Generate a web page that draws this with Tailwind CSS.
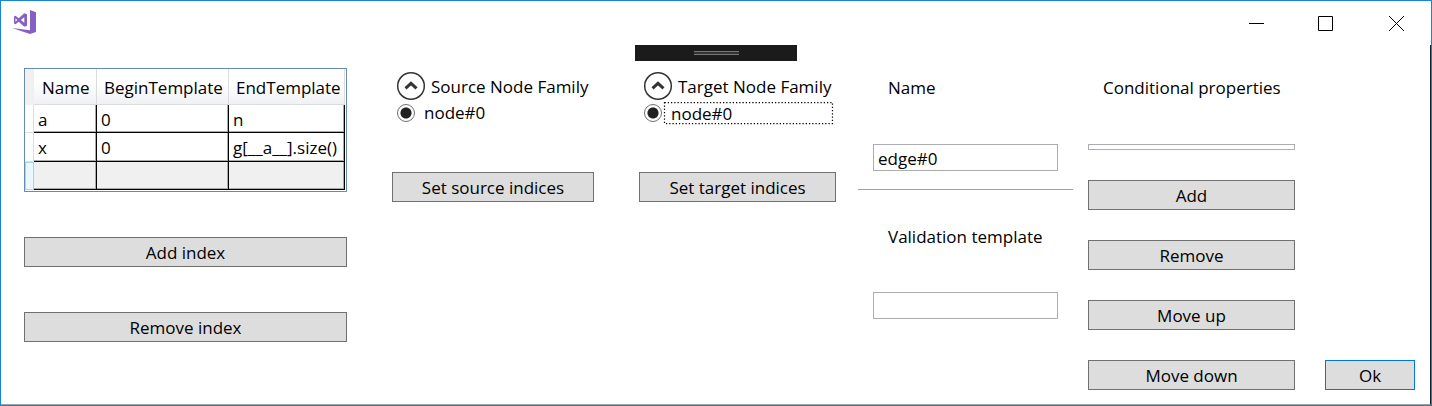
<!DOCTYPE html>
<html lang="en">
<head>
<meta charset="utf-8">
<meta name="viewport" content="width=device-width, initial-scale=1">
<title>Edge editor</title>
<script src="https://cdn.jsdelivr.net/npm/@tailwindcss/browser@4"></script>
</head>
<body class="bg-white font-['Open_Sans','Noto_Sans',sans-serif] text-[17px] leading-6 text-black">
<div class="flex min-h-screen flex-col border border-[#1883d7]">
  <header class="flex h-11 items-start justify-between">
    <svg class="mt-[9px] ml-[11px] size-6" viewBox="0 0 24 24" fill="#865fc5" aria-hidden="true">
      <path d="M18 0 24 2.300V22L18 24 0 18l18 2.300z"/>
      <path fill-rule="evenodd" d="M12.300 3.200 15 4.300V15.700L12.300 16.800 6.700 11.700 3.500 14.300 2 13.600V6.400L3.500 5.700 6.700 8.300zM12.300 7.200 8.800 10l3.500 2.800zM3.500 8.200V11.800L5.300 10z"/>
    </svg>
    <div class="flex">
      <button type="button" aria-label="Minimize" class="flex h-11 w-[68px] items-center justify-center"><svg class="size-[15px]" viewBox="0 0 15 15" stroke="#000" fill="none"><path d="M0 7.500H15"/></svg></button>
      <button type="button" aria-label="Maximize" class="flex h-11 w-[71px] items-center justify-center"><svg class="size-[15px]" viewBox="0 0 15 15" stroke="#000" fill="none"><path d="M.5.5h14v14H.5z"/></svg></button>
      <button type="button" aria-label="Close" class="flex h-11 w-[70px] items-center justify-center"><svg class="size-[15px]" viewBox="0 0 15 15" stroke="#000" fill="none"><path d="m0 0 15 15M15 0 0 15"/></svg></button>
    </div>
  </header>

  <main class="relative flex grow border-r border-b border-r-[#1b1b1c] border-b-[#a0a0a0] pt-[23px] pr-[15px] pb-[14px] pl-[23px]">
    <div class="absolute top-0 left-[634px] flex h-4 w-[162px] items-center justify-center bg-[#1b1b1c]"><span class="h-1 w-[45px] border-y border-[#777] bg-[#333]"></span></div>

    <section class="mr-[45px] flex min-w-0 flex-[323] flex-col">
      <div class="border border-[#688caf] pr-px pb-px">
      <table class="w-full table-fixed border-separate border-spacing-0 text-left">
        <colgroup><col class="w-[9px]"><col class="w-[63px]"><col class="w-[132px]"><col></colgroup>
        <thead>
          <tr class="h-9">
            <td class="bg-[#f0f0f0]"></td>
            <th scope="col" class="border-r border-b border-[#dcdcdc] bg-linear-to-b from-white from-40% to-[#f0f1f3] pt-[2px] pl-2 font-normal">Name</th>
            <th scope="col" class="border-r border-b border-[#dcdcdc] bg-linear-to-b from-white from-40% to-[#f0f1f3] pt-[2px] pl-[7px] font-normal">BeginTemplate</th>
            <th scope="col" class="border-r border-b border-[#dcdcdc] bg-linear-to-b from-white from-40% to-[#f0f1f3] pt-[2px] pl-[7px] font-normal">EndTemplate</th>
          </tr>
        </thead>
        <tbody>
          <tr class="h-7">
            <td class="border-r border-b border-[#dcdcdc]"></td>
            <td class="border-r border-b border-black pt-[2px] pl-1 leading-5 shadow-[inset_-1px_-1px_#aaa]">a</td>
            <td class="border-r border-b border-black pt-[2px] pl-1 leading-5 shadow-[inset_-1px_-1px_#aaa]">0</td>
            <td class="border-r border-b border-black pt-[2px] pl-1 leading-5 shadow-[inset_-1px_-1px_#aaa]">n</td>
          </tr>
          <tr class="h-[29px]">
            <td class="border-r border-b border-[#dcdcdc]"></td>
            <td class="border-r border-b border-black pt-[2px] pl-1 leading-5 shadow-[inset_-1px_-1px_#aaa]">x</td>
            <td class="border-r border-b border-black pt-[2px] pl-1 leading-5 shadow-[inset_-1px_-1px_#aaa]">0</td>
            <td class="border-r border-b border-black pt-[2px] pl-1 leading-5 shadow-[inset_-1px_-1px_#aaa]">g[__a__].size()</td>
          </tr>
          <tr class="h-7">
            <td class="border border-[#99d9f5] bg-[#eaf7fd]"></td>
            <td class="border-r border-b border-black bg-[#f0f0f0] shadow-[inset_-1px_-1px_#aaa]"></td>
            <td class="border-r border-b border-black bg-[#f0f0f0] shadow-[inset_-1px_-1px_#aaa]"></td>
            <td class="border-r border-b border-black bg-[#f0f0f0] shadow-[inset_-1px_-1px_#aaa]"></td>
          </tr>
        </tbody>
      </table>
      </div>
      <button type="button" class="mt-[45px] h-[30px] border border-[#707070] bg-[#ddd] pt-[2px]">Add index</button>
      <button type="button" class="mt-[45px] h-[30px] border border-[#707070] bg-[#ddd] pt-[2px]">Remove index</button>
    </section>

    <section class="mr-[45px] flex min-w-0 flex-[202] flex-col">
      <button type="button" aria-expanded="true" class="mt-[3px] ml-1 flex h-[30px] items-center gap-[5px] whitespace-nowrap">
        <svg class="size-[30px] shrink-0" viewBox="0 0 30 30" fill="none" stroke="#333"><circle cx="15" cy="15" r="13.300" stroke-width="1.500"/><path d="m9.500 17.300 5.500-5 5.500 5" stroke-width="3"/></svg>
        <span class="pt-[2px]">Source Node Family</span>
      </button>
      <label class="ml-[5px] flex h-6 items-center gap-[9px]">
        <input type="radio" name="source" checked class="size-[18px] appearance-none rounded-full border border-[#707070] bg-white bg-radial from-[#212121] from-[5px] to-white to-[6px]">
        node#0
      </label>
      <button type="button" class="mt-[47px] h-[30px] border border-[#707070] bg-[#ddd] pt-[2px]">Set source indices</button>
    </section>

    <section class="mr-[22px] flex min-w-0 flex-[197] flex-col">
      <button type="button" aria-expanded="true" class="mt-[3px] ml-1 flex h-[30px] items-center gap-[5px] whitespace-nowrap">
        <svg class="size-[30px] shrink-0" viewBox="0 0 30 30" fill="none" stroke="#333"><circle cx="15" cy="15" r="13.300" stroke-width="1.500"/><path d="m9.500 17.300 5.500-5 5.500 5" stroke-width="3"/></svg>
        <span class="pt-[2px]">Target Node Family</span>
      </button>
      <label class="mr-[3px] ml-[5px] flex h-6 items-center gap-[2px]">
        <input type="radio" name="target" checked class="size-[18px] appearance-none rounded-full border border-[#707070] bg-white bg-radial from-[#212121] from-[5px] to-white to-[6px]">
        <span class="relative h-[22px] grow pl-[7px]">node#0
          <svg class="absolute inset-0 size-full overflow-visible" aria-hidden="true"><rect x="0.500" y="0.500" width="99.400%" height="21" fill="none" stroke="#000" stroke-width="1.250" stroke-dasharray="1.250 2"/></svg>
        </span>
      </label>
      <button type="button" class="mt-[47px] h-[30px] border border-[#707070] bg-[#ddd] pt-[2px]">Set target indices</button>
    </section>

    <section class="mr-[15px] flex min-w-0 flex-[215] flex-col">
      <label for="name" class="mt-2 ml-[30px]">Name</label>
      <input id="name" type="text" value="edge#0" class="mx-[15px] mt-11 h-[27px] min-w-0 border border-[#abadb3] px-1 pt-[2px] outline-none">
      <hr class="mt-[18px] border-[#a0a0a0]">
      <label for="validation" class="mt-[35px] ml-[30px]">Validation template</label>
      <input id="validation" type="text" class="mx-[15px] mt-[43px] h-[27px] min-w-0 border border-[#abadb3] px-1 pt-[2px] outline-none">
    </section>

    <section class="mr-[30px] flex min-w-0 flex-[207] flex-col">
      <h2 id="conditional" class="mt-2 ml-[15px] whitespace-nowrap">Conditional properties</h2>
      <div role="listbox" aria-labelledby="conditional" class="mt-11 h-[6px] border border-[#abadb3]"></div>
      <button type="button" class="mt-[30px] h-[30px] border border-[#707070] bg-[#ddd] pt-[2px]">Add</button>
      <button type="button" class="mt-[30px] h-[30px] border border-[#707070] bg-[#ddd] pt-[2px]">Remove</button>
      <button type="button" class="mt-[30px] h-[30px] border border-[#707070] bg-[#ddd] pt-[2px]">Move up</button>
      <button type="button" class="mt-[30px] h-[30px] border border-[#707070] bg-[#ddd] pt-[2px]">Move down</button>
    </section>

    <section class="flex min-w-0 flex-[90] flex-col justify-end">
      <button type="button" class="h-[30px] border border-[#0078d7] bg-[#ddd] pt-[2px]">Ok</button>
    </section>
  </main>
</div>
</body>
</html>
